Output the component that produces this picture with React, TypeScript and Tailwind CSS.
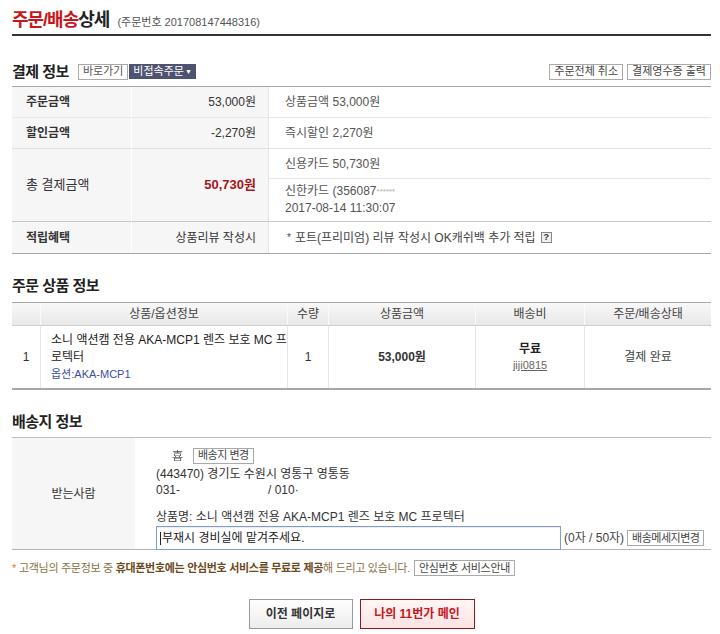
import React from "react"

function SmallButton({ children, className = "" }: { children: React.ReactNode; className?: string }) {
  return (
    <span
      className={`inline-flex items-center h-[16px] px-[4px] border border-[#a9a9a9] bg-white text-[11px] leading-none text-[#444] whitespace-nowrap ${className}`}
    >
      {children}
    </span>
  )
}

function SectionTitle({ children }: { children: React.ReactNode }) {
  return <h2 className="text-[15px] font-bold text-[#222] leading-none tracking-[-0.5px]">{children}</h2>
}

function PaymentInfo() {
  return (
    <div className="border-t border-b border-[#a8a8a8] grid grid-cols-[120px_136px_1fr]">
      {/* 주문금액 */}
      <div className="h-[31px] bg-[#f6f6f6] flex items-center pl-[14px] font-bold text-[#333] border-r border-white border-b border-b-[#e8e8e8]">
        주문금액
      </div>
      <div className="h-[31px] bg-[#f6f6f6] flex items-center justify-end pr-[12px] border-b border-[#e8e8e8]">53,000원</div>
      <div className="h-[31px] flex items-center pl-[16px] text-[#555] border-l border-[#e3e3e3] border-b border-b-[#e8e8e8]">
        상품금액 53,000원
      </div>

      {/* 할인금액 */}
      <div className="h-[31px] bg-[#f6f6f6] flex items-center pl-[14px] font-bold text-[#333] border-r border-white border-b border-b-[#e0e0e0]">
        할인금액
      </div>
      <div className="h-[31px] bg-[#f6f6f6] flex items-center justify-end pr-[12px] border-b border-[#e0e0e0]">-2,270원</div>
      <div className="h-[31px] flex items-center pl-[16px] text-[#555] border-l border-[#e3e3e3] border-b border-b-[#e0e0e0]">
        즉시할인 2,270원
      </div>

      {/* 총 결제금액 */}
      <div className="h-[73px] bg-[#f6f6f6] flex items-center pl-[14px] text-[13px] text-[#333] border-r border-white border-b border-b-[#c8c8c8]">
        총 결제금액
      </div>
      <div className="h-[73px] bg-[#f6f6f6] flex items-center justify-end pr-[12px] font-bold text-[13px] text-[#a8141b] border-b border-[#c8c8c8]">
        50,730원
      </div>
      <div className="h-[73px] flex flex-col border-l border-[#e3e3e3] border-b border-b-[#c8c8c8] text-[#555]">
        <div className="h-[30px] flex items-center pl-[16px] border-b border-[#e6e6e6]">신용카드 50,730원</div>
        <div className="flex-1 flex flex-col justify-center pl-[16px] leading-[17px]">
          <span>
            신한카드 (356087<span className="text-[8px] align-top text-[#aaa]">******</span>
          </span>
          <span>2017-08-14 11:30:07</span>
        </div>
      </div>

      {/* 적립혜택 */}
      <div className="h-[31px] bg-[#f6f6f6] flex items-center pl-[14px] font-bold text-[#333] border-r border-white">
        적립혜택
      </div>
      <div className="h-[31px] bg-[#f6f6f6] flex items-center justify-end pr-[12px]">상품리뷰 작성시</div>
      <div className="h-[31px] flex items-center pl-[18px] text-[#444] border-l border-[#e3e3e3]">
        <span className="mr-[4px] text-[10px]">*</span>
        포트(프리미엄) 리뷰 작성시 OK캐쉬백 추가 적립
        <span className="ml-[5px] inline-flex items-center justify-center w-[11px] h-[11px] border border-[#888] bg-[#eee] text-[9px] font-bold leading-none text-[#333]">
          ?
        </span>
      </div>
    </div>
  )
}

function ProductInfo() {
  const head = "flex items-center justify-center border-r border-[#fafafa] last:border-r-0"
  const cell = "flex items-center justify-center border-r border-[#e6e6e6] last:border-r-0"
  return (
    <div className="border-t border-[#a8a8a8] border-b">
      <div className="grid grid-cols-[29px_247px_41px_147px_109px_1fr] h-[23px] bg-gradient-to-b from-[#f8f8f8] to-[#e8e8e8] border-b border-[#cfcfcf] text-[#444]">
        <div className={head}></div>
        <div className={head}>상품/옵션정보</div>
        <div className={head}>수량</div>
        <div className={head}>상품금액</div>
        <div className={head}>배송비</div>
        <div className={head}>주문/배송상태</div>
      </div>
      <div className="grid grid-cols-[29px_247px_41px_147px_109px_1fr] h-[63px] border-b border-[#a8a8a8] text-[#333]">
        <div className={cell}>1</div>
        <div className="flex flex-col justify-center pl-[10px] border-r border-[#e6e6e6] leading-[17px]">
          <span className="text-[#222]">
            소니 액션캠 전용 AKA-MCP1 렌즈 보호 MC 프<br />
            로텍터
          </span>
          <span className="text-[11px] text-[#3b4ea0]">옵션:AKA-MCP1</span>
        </div>
        <div className={cell}>1</div>
        <div className={`${cell} font-bold`}>53,000원</div>
        <div className={`${cell} flex-col leading-[16px]`}>
          <span className="font-bold text-[#222]">무료</span>
          <span className="text-[11px] underline text-[#666]">jiji0815</span>
        </div>
        <div className={`${cell} text-[#444]`}>결제 완료</div>
      </div>
    </div>
  )
}

function ShippingInfo() {
  return (
    <div className="border-t border-[#bdbdbd] border-b border-b-[#b5b5b5] flex h-[113px]">
      <div className="w-[123px] bg-[#f6f6f6] flex items-center justify-center text-[#333] shrink-0">받는사람</div>
      <div className="flex-1 pl-[21px] pt-[9px] text-[#333] leading-[16px]">
        <div className="flex items-center h-[17px] pl-[16px]">
          <span className="text-[#555] text-[11px] blur-[0.4px]">喜</span>
          <SmallButton className="ml-[10px] px-[3px] tracking-[-0.5px]">배송지 변경</SmallButton>
        </div>
        <div className="mt-[2px]">(443470) 경기도 수원시 영통구 영통동</div>
        <div>
          031-<span className="inline-block w-[88px]"></span>/ 010·
        </div>
        <div className="mt-[11px]">상품명: 소니 액션캠 전용 AKA-MCP1 렌즈 보호 MC 프로텍터</div>
        <div className="flex items-center mt-[1px]">
          <div className="w-[405px] h-[24px] border border-[#7f9dc9] flex items-center px-[3px] text-[#222] shadow-[inset_0_1px_1px_rgba(0,0,0,0.08)]">
            <span className="w-px h-[13px] bg-[#222] mr-[1px]"></span>
            부재시 경비실에 맡겨주세요.
          </div>
          <span className="ml-[3px] text-[#444]">(0자 / 50자)</span>
          <SmallButton className="ml-[3px] px-[3px] tracking-[-0.5px]">배송메세지변경</SmallButton>
        </div>
      </div>
    </div>
  )
}

export default function App() {
  return (
    <div className="w-[720px] h-[634px] bg-white pl-[12px] pr-[9px] text-[12px] text-[#333] font-['Liberation_Sans','Noto_Sans_CJK_KR',sans-serif] overflow-hidden">
      {/* 헤더 */}
      <div className="flex items-end h-[36px] border-b-2 border-[#333] pb-[5px]">
        <h1 className="text-[18px] font-bold leading-none tracking-[-1px]">
          <span className="text-[#c8161d]">주문/배송</span>
          <span className="text-[#222]">상세</span>
        </h1>
        <span className="ml-[8px] text-[11px] text-[#555] leading-none mb-[1px]">(주문번호 201708147448316)</span>
      </div>

      {/* 결제 정보 */}
      <div className="mt-[27px] mb-[6px] h-[17px] flex items-center justify-between">
        <div className="flex items-center">
          <SectionTitle>결제 정보</SectionTitle>
          <SmallButton className="ml-[9px] h-[15px] text-[#555]">바로가기</SmallButton>
          <span className="ml-[1px] inline-flex items-center h-[15px] px-[4px] bg-[#4e5470] text-white text-[11px] leading-none">
            비접속주문<span className="ml-[1px] text-[7px]">▼</span>
          </span>
        </div>
        <div className="flex items-center gap-[4px]">
          <SmallButton>주문전체 취소</SmallButton>
          <SmallButton>결제영수증 출력</SmallButton>
        </div>
      </div>
      <PaymentInfo />

      {/* 주문 상품 정보 */}
      <div className="mt-[24px] mb-[9px]">
        <SectionTitle>주문 상품 정보</SectionTitle>
      </div>
      <ProductInfo />

      {/* 배송지 정보 */}
      <div className="mt-[24px] mb-[8px]">
        <SectionTitle>배송지 정보</SectionTitle>
      </div>
      <ShippingInfo />

      {/* 안내 */}
      <div className="mt-[10px] flex items-center text-[11px] text-[#8a6e45] tracking-[-0.3px]">
        <span className="text-[#e0771c] mr-[3px]">*</span>
        고객님의 주문정보 중&nbsp;
        <b className="text-[#6b4a1c]">휴대폰번호에는 안심번호 서비스를 무료로 제공</b>해 드리고 있습니다.
        <SmallButton className="ml-[4px] text-[#444]">안심번호 서비스안내</SmallButton>
      </div>

      {/* 버튼 */}
      <div className="mt-[22px] flex justify-center gap-[7px]">
        <button className="w-[104px] h-[30px] border border-[#9a9a9a] bg-gradient-to-b from-white to-[#ececec] text-[12px] font-bold text-[#333]">
          이전 페이지로
        </button>
        <button className="w-[115px] h-[30px] border border-[#8b1a1f] bg-gradient-to-b from-[#fff6f6] to-[#fbe3e3] text-[12px] font-bold text-[#c8161d]">
          나의 11번가 메인
        </button>
      </div>
    </div>
  )
}
